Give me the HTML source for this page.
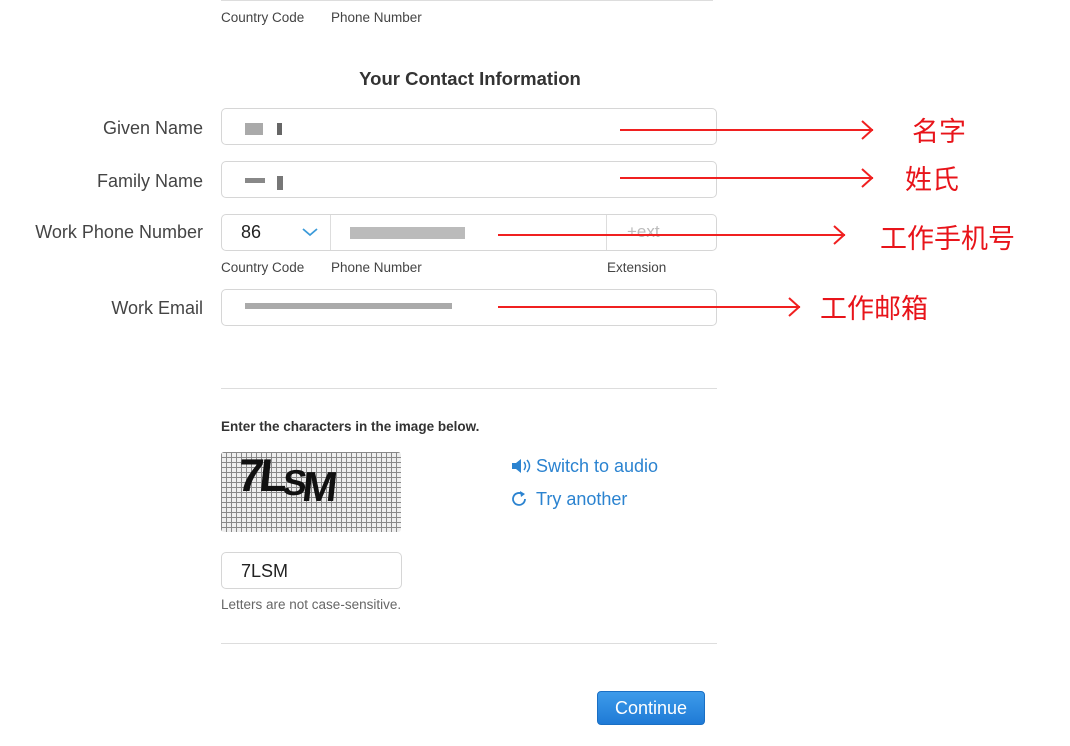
<!DOCTYPE html>
<html><head><meta charset="utf-8"><style>
body{margin:0;width:1070px;height:746px;background:#fff;position:relative;overflow:hidden;font-family:"Liberation Sans",sans-serif;color:#333}
.a{position:absolute}
.lbl{font-size:18px;color:#444;text-align:right;width:203px;left:0}
.inp{border:1px solid #d6d6d6;border-radius:5px;background:#fff;box-sizing:border-box}
.sm{font-size:13.5px;color:#444}
.zh{font-family:"Noto Sans CJK SC",sans-serif;color:#e8141a;font-size:27px;line-height:1}
.px{position:absolute;background:#999}
</style></head><body>
<div class="a" style="left:221px;top:0;width:492px;height:1px;background:#ddd"></div>
<div class="a sm" style="left:221px;top:10px">Country Code</div>
<div class="a sm" style="left:331px;top:10px">Phone Number</div>
<div class="a" style="left:0;width:940px;top:68px;text-align:center;font-size:18.5px;font-weight:bold;color:#333">Your Contact Information</div>

<div class="a lbl" style="top:118px">Given Name</div>
<div class="a inp" style="left:221px;top:108px;width:496px;height:37px"></div>
<div class="px" style="left:245px;top:123px;width:18px;height:12px;background:#aaa"></div><div class="px" style="left:277px;top:123px;width:5px;height:12px;background:#666"></div>

<div class="a lbl" style="top:171px">Family Name</div>
<div class="a inp" style="left:221px;top:161px;width:496px;height:37px"></div>
<div class="px" style="left:245px;top:178px;width:20px;height:5px;background:#888"></div><div class="px" style="left:277px;top:176px;width:6px;height:14px;background:#777"></div>

<div class="a lbl" style="top:222px">Work Phone Number</div>
<div class="a inp" style="left:221px;top:214px;width:496px;height:37px"></div>
<div class="a" style="left:330px;top:215px;width:1px;height:35px;background:#ddd"></div>
<div class="a" style="left:606px;top:215px;width:1px;height:35px;background:#ddd"></div>
<div class="a" style="left:241px;top:222px;font-size:18px;color:#222">86</div>
<svg class="a" style="left:301px;top:226px" width="18" height="12"><path d="M2 3l7 6 7-6" fill="none" stroke="#3a9ad9" stroke-width="1.8"/></svg>
<div class="px" style="left:350px;top:227px;width:115px;height:12px;background:#bbb"></div>
<div class="a" style="left:627px;top:222px;font-size:17px;color:#bbb">+ext</div>
<div class="a sm" style="left:221px;top:260px">Country Code</div>
<div class="a sm" style="left:331px;top:260px">Phone Number</div>
<div class="a sm" style="left:607px;top:260px">Extension</div>

<div class="a lbl" style="top:298px">Work Email</div>
<div class="a inp" style="left:221px;top:289px;width:496px;height:37px"></div>
<div class="px" style="left:245px;top:303px;width:207px;height:6px;background:#aaa"></div>

<svg class="a" style="left:0;top:0" width="1070" height="746">
<g stroke="#f02020" stroke-width="2" fill="none">
<path d="M620 130H873M862 121l10 9-10 9"/>
<path d="M620 178H873M862 169l10 9-10 9"/>
<path d="M498 235H845M834 226l10 9-10 9"/>
<path d="M498 307H800M789 298l10 9-10 9"/>
</g></svg>
<div class="a zh" style="left:912px;top:116px">名字</div>
<div class="a zh" style="left:905px;top:164px">姓氏</div>
<div class="a zh" style="left:880px;top:223px">工作手机号</div>
<div class="a zh" style="left:820px;top:293px">工作邮箱</div>

<div class="a" style="left:221px;top:388px;width:496px;height:1px;background:#ddd"></div>
<div class="a" style="left:221px;top:419px;font-size:13.5px;color:#333;font-weight:bold">Enter the characters in the image below.</div>
<div class="a" style="left:221px;top:452px;width:180px;height:80px;border-radius:3px;background-color:#eee;background-image:linear-gradient(#888 1px,transparent 1px),linear-gradient(90deg,#888 1px,transparent 1px);background-size:5px 5px"></div>
<div class="a" style="left:238px;top:448px;font-size:46px;font-weight:bold;color:#111;letter-spacing:-4px;transform:skewX(-6deg)">7L<span style="font-size:36px;position:relative;top:4px">S</span><span style="font-size:42px;position:relative;top:10px">M</span></div>
<svg class="a" style="left:511px;top:458px" width="20" height="16"><path d="M1 5h4l5-4v14l-5-4H1z" fill="#2b83d0"/><path d="M13 4q3 4 0 8M16 2q5 6 0 12" fill="none" stroke="#2b83d0" stroke-width="1.5"/></svg>
<div class="a" style="left:536px;top:456px;font-size:18px;color:#2b83d0">Switch to audio</div>
<svg class="a" style="left:511px;top:490px" width="18" height="18"><path d="M12 4.5A6 6 0 1 0 14 9" fill="none" stroke="#2b83d0" stroke-width="1.8"/><path d="M9 1l5 3-4 3z" fill="#2b83d0"/></svg>
<div class="a" style="left:536px;top:489px;font-size:18px;color:#2b83d0">Try another</div>
<div class="a inp" style="left:221px;top:552px;width:181px;height:37px"></div>
<div class="a" style="left:241px;top:561px;font-size:18px;color:#222">7LSM</div>
<div class="a" style="left:221px;top:597px;font-size:13.5px;color:#666">Letters are not case-sensitive.</div>
<div class="a" style="left:221px;top:643px;width:496px;height:1px;background:#ddd"></div>
<div class="a" style="left:597px;top:691px;width:108px;height:34px;border-radius:4px;background:linear-gradient(#3d9bea,#1f7ad6);border:1px solid #1a6fc4;box-sizing:border-box;color:#fff;font-size:18px;text-align:center;line-height:32px">Continue</div>
</body></html>
